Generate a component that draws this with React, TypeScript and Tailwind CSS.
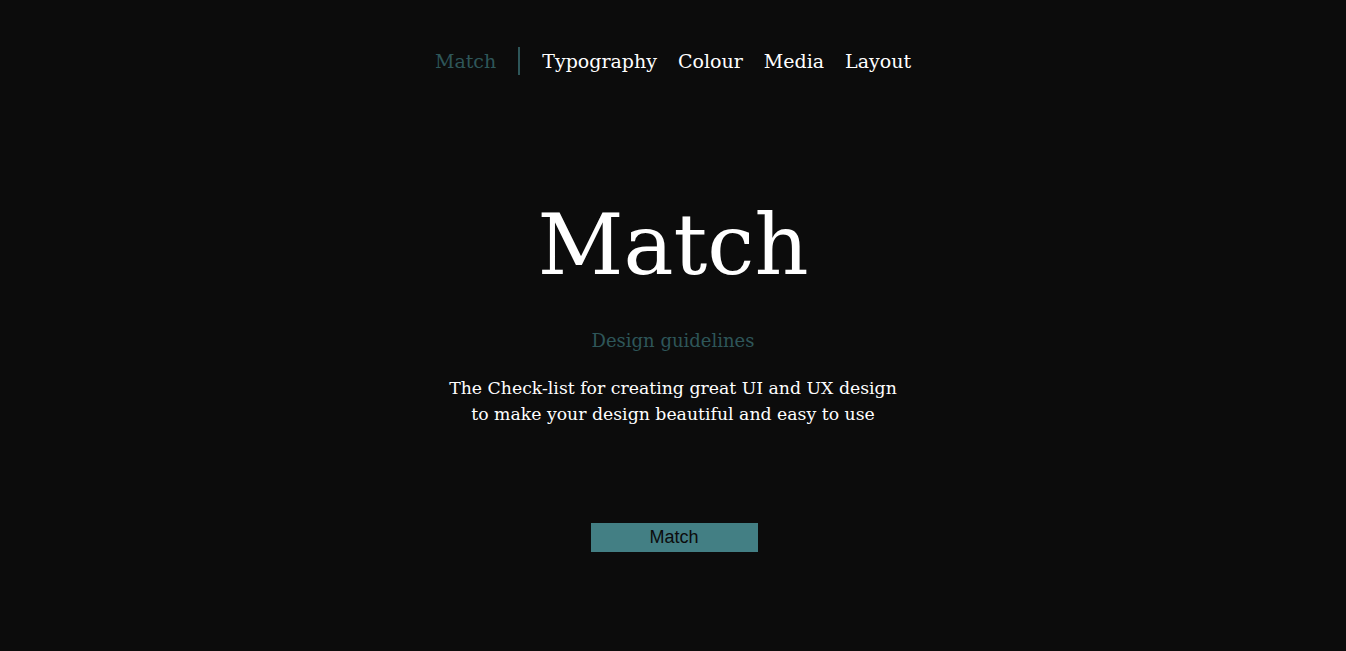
export default function App() {
  return (
    <div className="min-h-[651px] w-full bg-[#0c0c0c] font-['DejaVu_Serif',serif] text-white">
      {/* Навигация */}
      <nav className="flex items-center justify-center pt-[47px] text-[19px] leading-[28px]">
        <span className="text-[#2e5659]">Match</span>
        <span className="mx-[22px] h-[28px] w-[2px] bg-[#2e5659]" />
        <div className="flex gap-[21px]">
          <a href="#">Typography</a>
          <a href="#">Colour</a>
          <a href="#">Media</a>
          <a href="#">Layout</a>
        </div>
      </nav>

      {/* Hero */}
      <section className="flex flex-col items-center text-center">
        <h1 className="mt-[120px] text-[84px] leading-[100px]">Match</h1>
        <p className="mt-[32px] text-[18px] text-[#2e5659]">Design guidelines</p>
        <p className="mt-[21px] text-[17.3px] leading-[26px]">
          The Check-list for creating great UI and UX design
          <br />
          to make your design beautiful and easy to use
        </p>
        <button className="ml-[2px] mt-[96px] h-[29px] w-[167px] bg-[#437f84] font-['Liberation_Sans',sans-serif] text-[18px] text-[#0c0c0c]">
          Match
        </button>
      </section>
    </div>
  );
}
